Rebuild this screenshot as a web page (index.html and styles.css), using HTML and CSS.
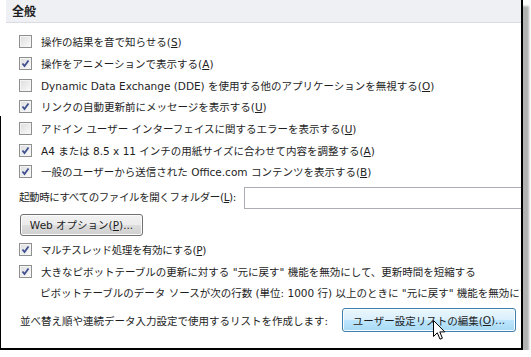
FILE: index.html
```html
<!DOCTYPE html>
<html lang="ja">
<head>
    <meta charset="UTF-8" />
    <title>Excel のオプション - 詳細設定</title>
    <link rel="stylesheet" href="styles.css">
</head>
<body>
    <div class="window">
        <div class="section-head">全般</div>

        <div class="options">
            <div class="row"><span class="cb"></span><span>操作の結果を音で知らせる(<u>S</u>)</span></div>
            <div class="row"><span class="cb checked"><svg viewBox="0 0 9 9"><path d="M1.5 4.5 L3.5 7 L7.5 1.5" /></svg></span><span>操作をアニメーションで表示する(<u>A</u>)</span></div>
            <div class="row"><span class="cb"></span><span>Dynamic Data Exchange (DDE) を使用する他のアプリケーションを無視する(<u>O</u>)</span></div>
            <div class="row"><span class="cb checked"><svg viewBox="0 0 9 9"><path d="M1.5 4.5 L3.5 7 L7.5 1.5" /></svg></span><span>リンクの自動更新前にメッセージを表示する(<u>U</u>)</span></div>
            <div class="row"><span class="cb"></span><span>アドイン ユーザー インターフェイスに関するエラーを表示する(<u>U</u>)</span></div>
            <div class="row"><span class="cb checked"><svg viewBox="0 0 9 9"><path d="M1.5 4.5 L3.5 7 L7.5 1.5" /></svg></span><span>A4 または 8.5 x 11 インチの用紙サイズに合わせて内容を調整する(<u>A</u>)</span></div>
            <div class="row"><span class="cb checked"><svg viewBox="0 0 9 9"><path d="M1.5 4.5 L3.5 7 L7.5 1.5" /></svg></span><span>一般のユーザーから送信された Office.com コンテンツを表示する(<u>B</u>)</span></div>
        </div>

        <div class="folder-row">
            <label>起動時にすべてのファイルを開くフォルダー(<u>L</u>):</label>
            <span class="textbox"></span>
        </div>

        <div class="web-row">
            <span class="btn">Web オプション(<u>P</u>)...</span>
        </div>

        <div class="options lower">
            <div class="row"><span class="cb checked"><svg viewBox="0 0 9 9"><path d="M1.5 4.5 L3.5 7 L7.5 1.5" /></svg></span><span class="tight">マルチスレッド処理を有効にする(<u>P</u>)</span></div>
            <div class="row"><span class="cb checked"><svg viewBox="0 0 9 9"><path d="M1.5 4.5 L3.5 7 L7.5 1.5" /></svg></span><span>大きなピボットテーブルの更新に対する "元に戻す" 機能を無効にして、更新時間を短縮する</span></div>
            <div class="note">ピボットテーブルのデータ ソースが次の行数 (単位: 1000 行) 以上のときに "元に戻す" 機能を無効にする</div>
        </div>

        <div class="list-row">
            <span>並べ替え順や連続データ入力設定で使用するリストを作成します:</span>
            <span class="btn btn-hot">ユーザー設定リストの編集(<u>O</u>)...</span>
        </div>

        <!-- マウスカーソル -->
        <svg class="cursor" width="13" height="22" viewBox="0 0 13 22">
            <path d="M0.5 0.5 L0.5 16.5 L4.3 12.8 L7 19.2 L9.4 18.2 L6.8 11.9 L11.8 11.9 Z" />
        </svg>
    </div>
</body>
</html>
```

FILE: styles.css
```css
body {
    margin: 0;
    background-color: #ffffff;
    font-family: "DejaVu Sans", "Noto Sans CJK JP", sans-serif;
    font-size: 10.5px;
    color: #1e1e1e;
}

.window {
    position: relative;
    width: 523px;
    height: 350px;
    box-sizing: border-box;
    border-right: 2px solid #000;
    border-bottom: 2px solid #000;
    background-color: #fff;
    box-shadow: 6px 6px 2px rgba(0, 0, 0, 0.3);
    overflow: hidden;
    white-space: nowrap;
}

/* 左の枠線は途中から */
.window::before {
    content: "";
    position: absolute;
    left: 0;
    top: 116px;
    bottom: 0;
    width: 1px;
    background-color: #000;
}

.section-head {
    height: 22px;
    line-height: 22px;
    margin-left: 6px;
    padding-left: 6px;
    background-color: #eef0f4;
    border-bottom: 1px solid #dadce1;
    font-family: "Noto Sans CJK JP", sans-serif;
    font-weight: bold;
    font-size: 12px;
}

.options {
    margin-top: 8px;
}

.row {
    display: flex;
    align-items: center;
    height: 21.7px;
    padding-left: 19px;
    gap: 9px;
}

.tight {
    letter-spacing: -0.4px;
}

.cb {
    width: 11px;
    height: 11px;
    flex: none;
    border: 1px solid #8e8f8f;
    background: linear-gradient(135deg, #dcdcdc, #fbfbfb);
    box-shadow: inset 0 0 0 1px #f4f4f4;
    display: flex;
    align-items: center;
    justify-content: center;
}

.cb svg {
    width: 9px;
    height: 9px;
}

.cb svg path {
    fill: none;
    stroke: #3d4f8e;
    stroke-width: 1.8;
}

.folder-row {
    display: flex;
    align-items: center;
    height: 22px;
    margin-top: 4px;
    padding-left: 19px;
}

.folder-row label {
    padding-bottom: 3px;
    letter-spacing: -0.4px;
}

.textbox {
    flex: none;
    width: 300px;
    height: 20px;
    margin-left: 8px;
    border: 1px solid #abadb3;
    background-color: #fff;
}

.web-row {
    margin-top: 5px;
    padding-left: 20px;
}

.btn {
    display: inline-flex;
    align-items: center;
    justify-content: center;
    box-sizing: border-box;
    height: 22px;
    width: 123px;
    border: 1px solid #707070;
    border-radius: 3px;
    background: linear-gradient(#f2f2f2 0%, #ebebeb 49%, #dddddd 51%, #cfcfcf 100%);
    box-shadow: inset 0 0 0 1px #fcfcfc;
}

.options.lower {
    margin-top: 3px;
}

.note {
    height: 22px;
    line-height: 22px;
    padding-left: 40px;
}

.list-row {
    display: flex;
    align-items: center;
    justify-content: space-between;
    margin-top: 4px;
    padding-left: 20px;
    padding-right: 5px;
}

.btn-hot {
    width: 174px;
    height: 24px;
    border-color: #3c7fb1;
    background: linear-gradient(#eaf6fd 0%, #d9f0fc 49%, #bee6fd 51%, #a7d9f5 100%);
}

.cursor {
    position: absolute;
    left: 433px;
    top: 320px;
}

.cursor path {
    fill: #fff;
    stroke: #000;
    stroke-width: 1;
}
```
